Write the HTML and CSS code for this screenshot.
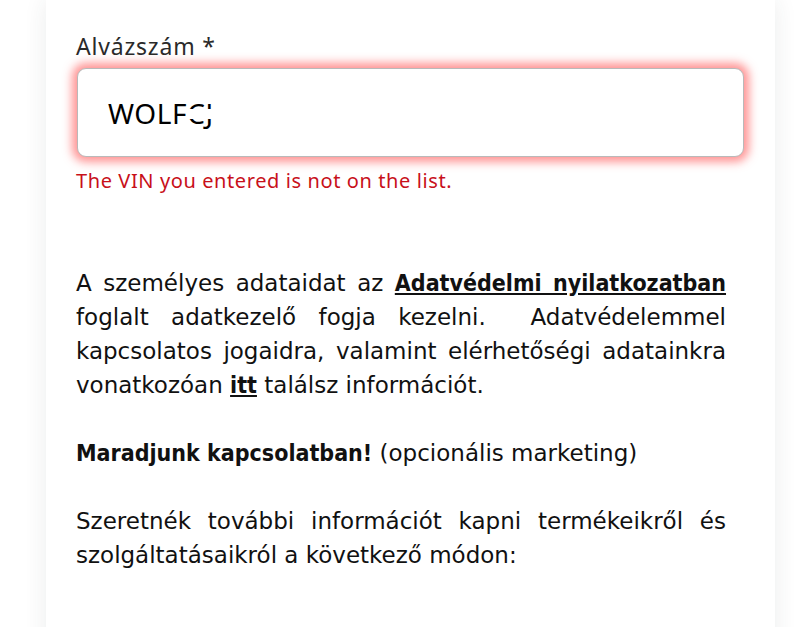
FILE: index.html
```html
<!DOCTYPE html>
<html lang="hu">
<head>
    <meta charset="UTF-8">
    <meta name="viewport" content="width=device-width, initial-scale=1.0">
    <title>Alvázszám</title>
    <link rel="stylesheet" href="styles.css">
</head>
<body>
    <div class="card">
        <label class="field-label" for="vin">Alvázszám *</label>
        <div class="field-input error" id="vin">WOLF<span class="masked">CJ</span></div>
        <div class="field-error">The VIN you entered is not on the list.</div>

        <p class="legal">A személyes adataidat az <a href="#">Adatvédelmi nyilatkozatban</a> foglalt adatkezelő fogja kezelni. &nbsp;Adatvédelemmel kapcsolatos jogaidra, valamint elérhetőségi adatainkra vonatkozóan <a href="#">itt</a> találsz információt.</p>

        <p class="marketing"><b>Maradjunk kapcsolatban!</b> (opcionális marketing)</p>

        <p class="marketing">Szeretnék további információt kapni termékeikről és szolgáltatásaikról a következő módon:</p>
    </div>
</body>
</html>
```

FILE: styles.css
```css
body {
    margin: 0;
    background: #fff;
    color: #111;
    overflow: hidden;
}
.card {
    margin-left: 46px;
    width: 729px;
    min-height: 700px;
    box-sizing: border-box;
    padding: 32px 31px 0 30px;
    background: #fff;
    box-shadow: 0 0 22px rgba(40, 60, 60, 0.09);
}
.field-label {
    display: block;
    font-family: "Noto Sans", sans-serif;
    font-size: 23px;
    letter-spacing: 0.8px;
    line-height: 28px;
    color: #2a2a2a;
    margin-bottom: 8px;
}
.field-input {
    height: 89px;
    box-sizing: border-box;
    margin-left: 1px;
    padding: 0 30px;
    display: flex;
    align-items: center;
    font-family: "Noto Sans", sans-serif;
    font-size: 28px;
    letter-spacing: 0.6px;
    color: #000;
    background: #fff;
    border: 1px solid #b9b9b9;
    border-radius: 9px;
}
.field-input.error {
    box-shadow: 0 0 10px 5px rgba(255, 60, 60, 0.55);
}
.masked {
    position: relative;
}
.masked::after {
    content: "";
    position: absolute;
    left: 0;
    right: 0;
    top: 40%;
    height: 28%;
    background: #fff;
}
.field-error {
    margin-top: 10px;
    font-family: "Noto Sans", sans-serif;
    font-size: 20px;
    letter-spacing: 0.6px;
    line-height: 28px;
    color: #c8101a;
}
p {
    margin: 71px 18px 0 0;
    font-family: "DejaVu Sans", sans-serif;
    font-size: 23px;
    line-height: 34px;
    text-align: justify;
}
p b,
.legal a {
    font-family: "DejaVu Sans Condensed", sans-serif;
    font-weight: bold;
}
.legal a {
    color: #111;
    text-decoration: underline;
}
.marketing {
    margin-top: 34px;
}
```
